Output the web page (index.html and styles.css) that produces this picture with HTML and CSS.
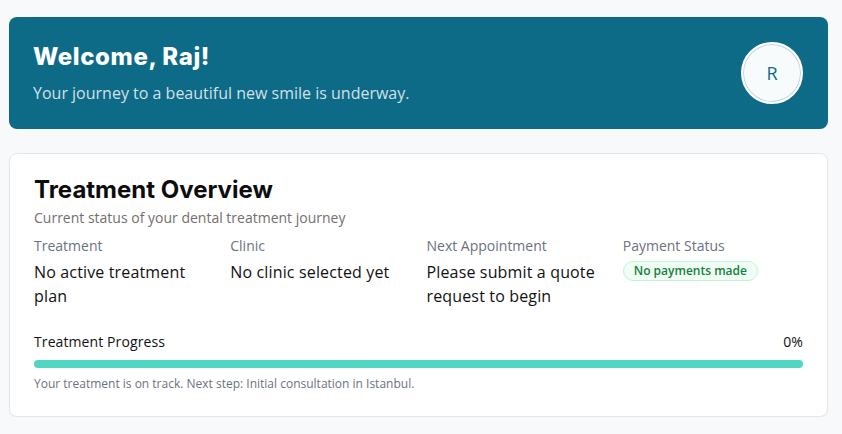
FILE: index.html
```html
<!DOCTYPE html>
<html lang="en">
<head>
<meta charset="utf-8">
<title>Dashboard</title>
<link rel="stylesheet" href="styles.css">
</head>
<body>
<main class="page">
  <section class="welcome">
    <div class="welcome-text">
      <h1 class="welcome-title">Welcome, Raj!</h1>
      <p class="welcome-sub">Your journey to a beautiful new smile is underway.</p>
    </div>
    <div class="avatar"><span>R</span></div>
  </section>

  <section class="card">
    <header class="card-header">
      <h2 class="card-title">Treatment Overview</h2>
      <p class="card-desc">Current status of your dental treatment journey</p>
    </header>
    <div class="card-content">
      <div class="info-grid">
        <div class="info">
          <div class="info-label">Treatment</div>
          <div class="info-value">No active treatment plan</div>
        </div>
        <div class="info">
          <div class="info-label">Clinic</div>
          <div class="info-value">No clinic selected yet</div>
        </div>
        <div class="info">
          <div class="info-label">Next Appointment</div>
          <div class="info-value">Please submit a quote request to begin</div>
        </div>
        <div class="info">
          <div class="info-label">Payment Status</div>
          <div class="info-badge-row"><span class="badge">No payments made</span></div>
        </div>
      </div>

      <div class="progress">
        <div class="progress-head">
          <span>Treatment Progress</span>
          <span>0%</span>
        </div>
        <div class="progress-track"><div class="progress-fill" style="width:0%"></div></div>
        <p class="progress-note">Your treatment is on track. Next step: Initial consultation in Istanbul.</p>
      </div>
    </div>
  </section>
</main>
</body>
</html>
```

FILE: styles.css
```css
* { box-sizing: border-box; }
html, body { margin: 0; padding: 0; }
body {
  background: #f8f9fb;
  font-family: "Open Sans", "Noto Sans", sans-serif;
  color: #111111;
}
.page {
  padding: 17px 14px 0 9px;
  display: flex;
  flex-direction: column;
  gap: 24px;
}
.welcome {
  background: #0e6b87;
  border-radius: 8px;
  padding: 24px 25px 24px 24px;
  display: flex;
  align-items: center;
  justify-content: space-between;
  color: #ffffff;
}
.welcome-title {
  margin: 0;
  font-family: "Inter", sans-serif;
  font-weight: 800;
  font-size: 24px;
  line-height: 32px;
  letter-spacing: 0.6px;
}
.welcome-sub {
  margin: 8px 0 0;
  font-size: 16px;
  line-height: 24px;
  color: rgba(255, 255, 255, 0.82);
}
.avatar {
  width: 62px;
  height: 62px;
  border-radius: 50%;
  background: #f8fbfc;
  border: 2px solid #ffffff;
  box-shadow: inset 0 0 0 1px #b9d6de;
  display: flex;
  align-items: center;
  justify-content: center;
  color: #0e6b87;
  font-size: 18px;
}
.card {
  background: #ffffff;
  border: 1px solid #e4e6ea;
  border-radius: 8px;
  box-shadow: 0 1px 2px rgba(0, 0, 0, 0.04);
}
.card-header {
  padding: 24px 24px 8px;
  display: flex;
  flex-direction: column;
  gap: 6px;
}
.card-title {
  margin: 0;
  font-family: "Inter", sans-serif;
  font-weight: 700;
  font-size: 24px;
  line-height: 24px;
  color: #0d0d0d;
  letter-spacing: 0;
}
.card-desc {
  margin: 0;
  font-size: 14px;
  line-height: 20px;
  color: #756e6e;
}
.card-content {
  padding: 0 24px 24px;
}
.info-grid {
  display: grid;
  grid-template-columns: repeat(4, 1fr);
  gap: 16px;
}
.info-label {
  font-size: 14px;
  line-height: 20px;
  color: #6b7280;
}
.info-value {
  margin-top: 4px;
  font-size: 16px;
  line-height: 24px;
  color: #111111;
  letter-spacing: 0.15px;
}
.info-badge-row {
  margin-top: 5px;
  display: flex;
}
.badge {
  display: inline-block;
  padding: 0 10px;
  border: 1px solid #bbf7d0;
  background: #f0fdf4;
  color: #15803d;
  border-radius: 999px;
  font-size: 12px;
  font-weight: 600;
  line-height: 18px;
}
.progress {
  margin-top: 24px;
}
.progress-head {
  display: flex;
  justify-content: space-between;
  font-size: 14px;
  line-height: 20px;
  color: #111111;
  letter-spacing: 0.1px;
}
.progress-track {
  margin-top: 8px;
  height: 8px;
  border-radius: 999px;
  background: #52d6c4;
  overflow: hidden;
}
.progress-fill {
  height: 100%;
  background: #0e6b87;
}
.progress-note {
  margin: 8px 0 0;
  font-size: 12px;
  line-height: 16px;
  color: #6b7280;
}
```
